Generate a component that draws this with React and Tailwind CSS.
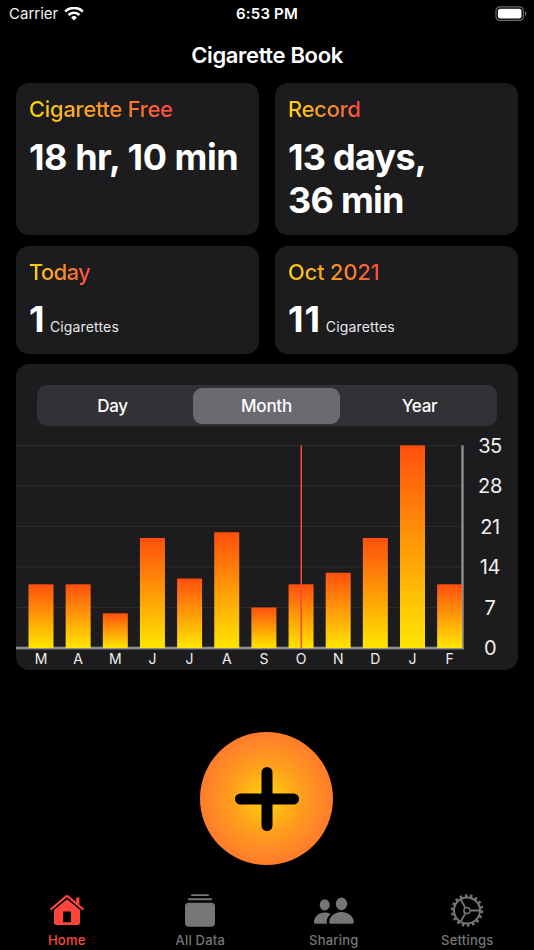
const months = [
  { label: "M", value: 11 },
  { label: "A", value: 11 },
  { label: "M", value: 6 },
  { label: "J", value: 19 },
  { label: "J", value: 12 },
  { label: "A", value: 20 },
  { label: "S", value: 7 },
  { label: "O", value: 11 },
  { label: "N", value: 13 },
  { label: "D", value: 19 },
  { label: "J", value: 35 },
  { label: "F", value: 11 },
];

const ticks = [35, 28, 21, 14, 7, 0];

const ranges = [
  { label: "Day", className: "pr-[5px]" },
  { label: "Month", className: "bg-[#6a6a70]" },
  { label: "Year", className: "pl-[2px]" },
];

function StatusBar() {
  return (
    <div className="grid h-7 grid-cols-3 items-center">
      <div className="flex items-center gap-[6px] pl-[9px] text-[15px] text-gray-100">
        <span>Carrier</span>
        <svg width="20" height="15" viewBox="0 0 20 15" fill="none" stroke="#fff" strokeWidth="2.7">
          <path d="M1.2 4.6a12.4 12.4 0 0 1 17.6 0" />
          <path d="M4.5 8a7.8 7.8 0 0 1 11 0" />
          <path d="M10 13.4 7.1 10.500a4.1 4.1 0 0 1 5.8 0z" fill="#fff" stroke="none" />
        </svg>
      </div>
      <div className="text-center text-[15px] font-semibold tracking-[0.2px]">6:53 PM</div>
      <div className="flex justify-end pr-[7px] pb-[2px]">
        <svg width="32" height="15" viewBox="0 0 32 15">
          <rect x="1" y="0.8" width="27.4" height="13.6" rx="4" fill="none" stroke="#6b6b6b" strokeWidth="1.2" />
          <rect x="2.9" y="2.7" width="23.6" height="9.8" rx="2.3" fill="#fff" />
          <path d="M30 5.3c2 .8 2 3.8 0 4.6z" fill="#6b6b6b" />
        </svg>
      </div>
    </div>
  );
}

function Card({ title, titleClass, children }) {
  return (
    <div className="rounded-[13px] bg-[#1c1c1e] px-[13px] pt-[10px]">
      <h2 className={`w-fit bg-linear-to-r from-[#ffd60a] via-[#ff9522] to-[#ff453a] bg-clip-text text-[22px] leading-8 font-[450] text-transparent ${titleClass}`}>
        {title}
      </h2>
      {children}
    </div>
  );
}

function Count({ value, valueClass }) {
  return (
    <p className="mt-[9px] flex items-baseline gap-[5px] leading-[44px]">
      <span className={`text-[36px] font-bold ${valueClass}`}>{value}</span>
      <span className="text-[14px] tracking-[0.15px] text-gray-200">Cigarettes</span>
    </p>
  );
}

function Chart() {
  const base = 214;
  const unit = 202.6 / 35;

  return (
    <svg className="mt-2 block" width="502" height="236" viewBox="0 0 502 236">
      <defs>
        <linearGradient id="bar" x1="0" y1="0" x2="0" y2="1">
          <stop offset="0" stopColor="#ff4f0e" />
          <stop offset="1" stopColor="#ffe600" />
        </linearGradient>
      </defs>
      {ticks.map((t) => (
        <g key={t}>
          <rect x="0" y={base - t * unit - 0.5} width="446" height="1" fill="#2d2d2f" />
          <text x="474" y={base - t * unit + 7.4} textAnchor="middle" fontSize="20" letterSpacing="-0.4" fill="#f0f0f0">
            {t}
          </text>
        </g>
      ))}
      <rect x="445.3" y="11.4" width="2.4" height="203.6" fill="#8e8e93" />
      <rect x="0" y="212.7" width="447.7" height="2.7" fill="#8e8e93" />
      {months.map((m, i) => (
        <g key={i}>
          <rect x={12.5 + i * 37.15} y={base - m.value * unit} width="25" height={m.value * unit} fill="url(#bar)" />
          <text x={25 + i * 37.15} y="230.3" textAnchor="middle" fontSize="14" fill="#f0f0f0">
            {m.label}
          </text>
        </g>
      ))}
      {/* current month */}
      <rect x="284.5" y="11.4" width="1.5" height="202.6" fill="#ff453a" />
    </svg>
  );
}

function HomeIcon() {
  return (
    <svg width="36" height="33" viewBox="0 1 36 33">
      <path d="M2.2 16 17.2 3.4a1.3 1.3 0 0 1 1.6 0L33.8 16" fill="none" stroke="#ff453a" strokeWidth="2.2" strokeLinecap="round" strokeLinejoin="round" />
      <path d="M27.2 4.500h3.2v8l-3.2-2.8z" fill="#ff453a" />
      <path fillRule="evenodd" d="M18 6.3 31 17v12.2a2.7 2.7 0 0 1-2.7 2.7H7.7A2.7 2.7 0 0 1 5 29.2V17zM14.2 18.5v10.7h7.8V18.5z" fill="#ff453a" />
    </svg>
  );
}

function StackIcon() {
  return (
    <svg width="36" height="33" viewBox="0 0 36 33" fill="#767676">
      <rect x="9" y="0.3" width="18" height="1.8" rx="0.9" />
      <rect x="6" y="4.3" width="24" height="2" rx="1" />
      <rect x="3" y="8.7" width="30" height="24" rx="4" />
    </svg>
  );
}

function PeopleIcon() {
  return (
    <svg width="42" height="33" viewBox="0 0.8 42 33" fill="#767676">
      <ellipse cx="11.7" cy="11.7" rx="5" ry="5.6" />
      <path d="M1 29c0-5 4.3-9.8 10.7-9.8 2.5 0 4.5.7 6 1.7-2.5 2-4 4.8-4 8 0 .6.1 1.1.4 1.7H2.8C1.5 30.6 1 30.2 1 29z" />
      <ellipse cx="28.5" cy="10.7" rx="5.7" ry="6.3" />
      <path d="M16.2 28.8c0-4.6 4.7-10 12.3-10s12.3 5.4 12.3 10c0 1.2-.7 1.8-2 1.8H18.2c-1.3 0-2-.6-2-1.8z" />
    </svg>
  );
}

function GearIcon() {
  return (
    <svg width="36" height="33" viewBox="-18 -16.5 36 33" fill="none" stroke="#767676">
      <circle r="13" strokeWidth="2" />
      <circle r="14.9" strokeWidth="2.6" strokeDasharray="2.5 2.701" />
      <circle r="3.1" strokeWidth="1.5" />
      <path d="M3.7 0H12.5M-1.9-3.2-6.3-10.9M-1.9 3.2-6.3 10.9" strokeWidth="1.8" />
    </svg>
  );
}

const tabs = [
  { label: "Home", icon: HomeIcon, className: "text-[#ff453a]" },
  { label: "All Data", icon: StackIcon, className: "text-[#767676]" },
  { label: "Sharing", icon: PeopleIcon, className: "text-[#767676]" },
  { label: "Settings", icon: GearIcon, className: "text-[#767676]" },
];

export default function App() {
  return (
    <div className="flex h-[950px] w-[534px] flex-col overflow-hidden bg-black font-['Inter',sans-serif] text-white">
      <StatusBar />
      <h1 className="flex h-[55px] items-center justify-center pb-px text-[22px] font-semibold tracking-[-0.35px]">Cigarette Book</h1>

      <main className="px-4">
        <div className="grid grid-cols-2 grid-rows-[152px_108px] gap-x-4 gap-y-[10.5px]">
          <Card title="Cigarette Free" titleClass="tracking-[-0.3px]">
            <p className="mt-[10px] text-[36px] leading-[44px] font-bold tracking-[-0.45px] whitespace-nowrap">18 hr, 10 min</p>
          </Card>
          <Card title="Record" titleClass="tracking-[-0.3px]">
            <p className="mt-[10.5px] text-[36px] leading-[43.5px] font-bold tracking-[-0.75px]">
              13 days,
              <br />
              36 min
            </p>
          </Card>
          <Card title="Today" titleClass="tracking-[-0.6px]">
            <Count value="1" valueClass="tracking-[0.4px]" />
          </Card>
          <Card title="Oct 2021" titleClass="tracking-[-0.2px]">
            <Count value="11" valueClass="tracking-[0.9px]" />
          </Card>
        </div>

        <section className="mt-[10.5px] h-[306px] overflow-hidden rounded-[13px] bg-[#1c1c1e] pt-[21px]">
          <div className="mx-[21px] grid h-[41px] grid-cols-[151px_147px_1fr] gap-x-[2.5px] rounded-[10px] bg-[#313136] p-[2.5px]">
            {ranges.map((r) => (
              <button key={r.label} className={`rounded-[9px] pt-[2px] text-[17px] font-medium tracking-[-0.25px] ${r.className}`}>
                {r.label}
              </button>
            ))}
          </div>
          <Chart />
        </section>
      </main>

      <button className="mt-[62px] ml-[200.4px] flex size-[133px] shrink-0 items-center justify-center rounded-full bg-[radial-gradient(closest-side,#ffd60a_0%,#ffa01c_50%,#ff7b2c_100%)]">
        <svg width="66" height="66" viewBox="0 0 66 66" stroke="#000" strokeWidth="11" strokeLinecap="round">
          <path d="M33 6.5v53M6.5 33h53" />
        </svg>
      </button>

      <nav className="mt-auto grid h-[56px] shrink-0 grid-cols-4">
        {tabs.map(({ label, icon: Icon, className }) => (
          <div key={label} className={`flex flex-col items-center text-[13px] leading-4 font-medium tracking-[0.2px] ${className}`}>
            <Icon />
            <span className="mt-[5px]">{label}</span>
          </div>
        ))}
      </nav>
    </div>
  );
}
